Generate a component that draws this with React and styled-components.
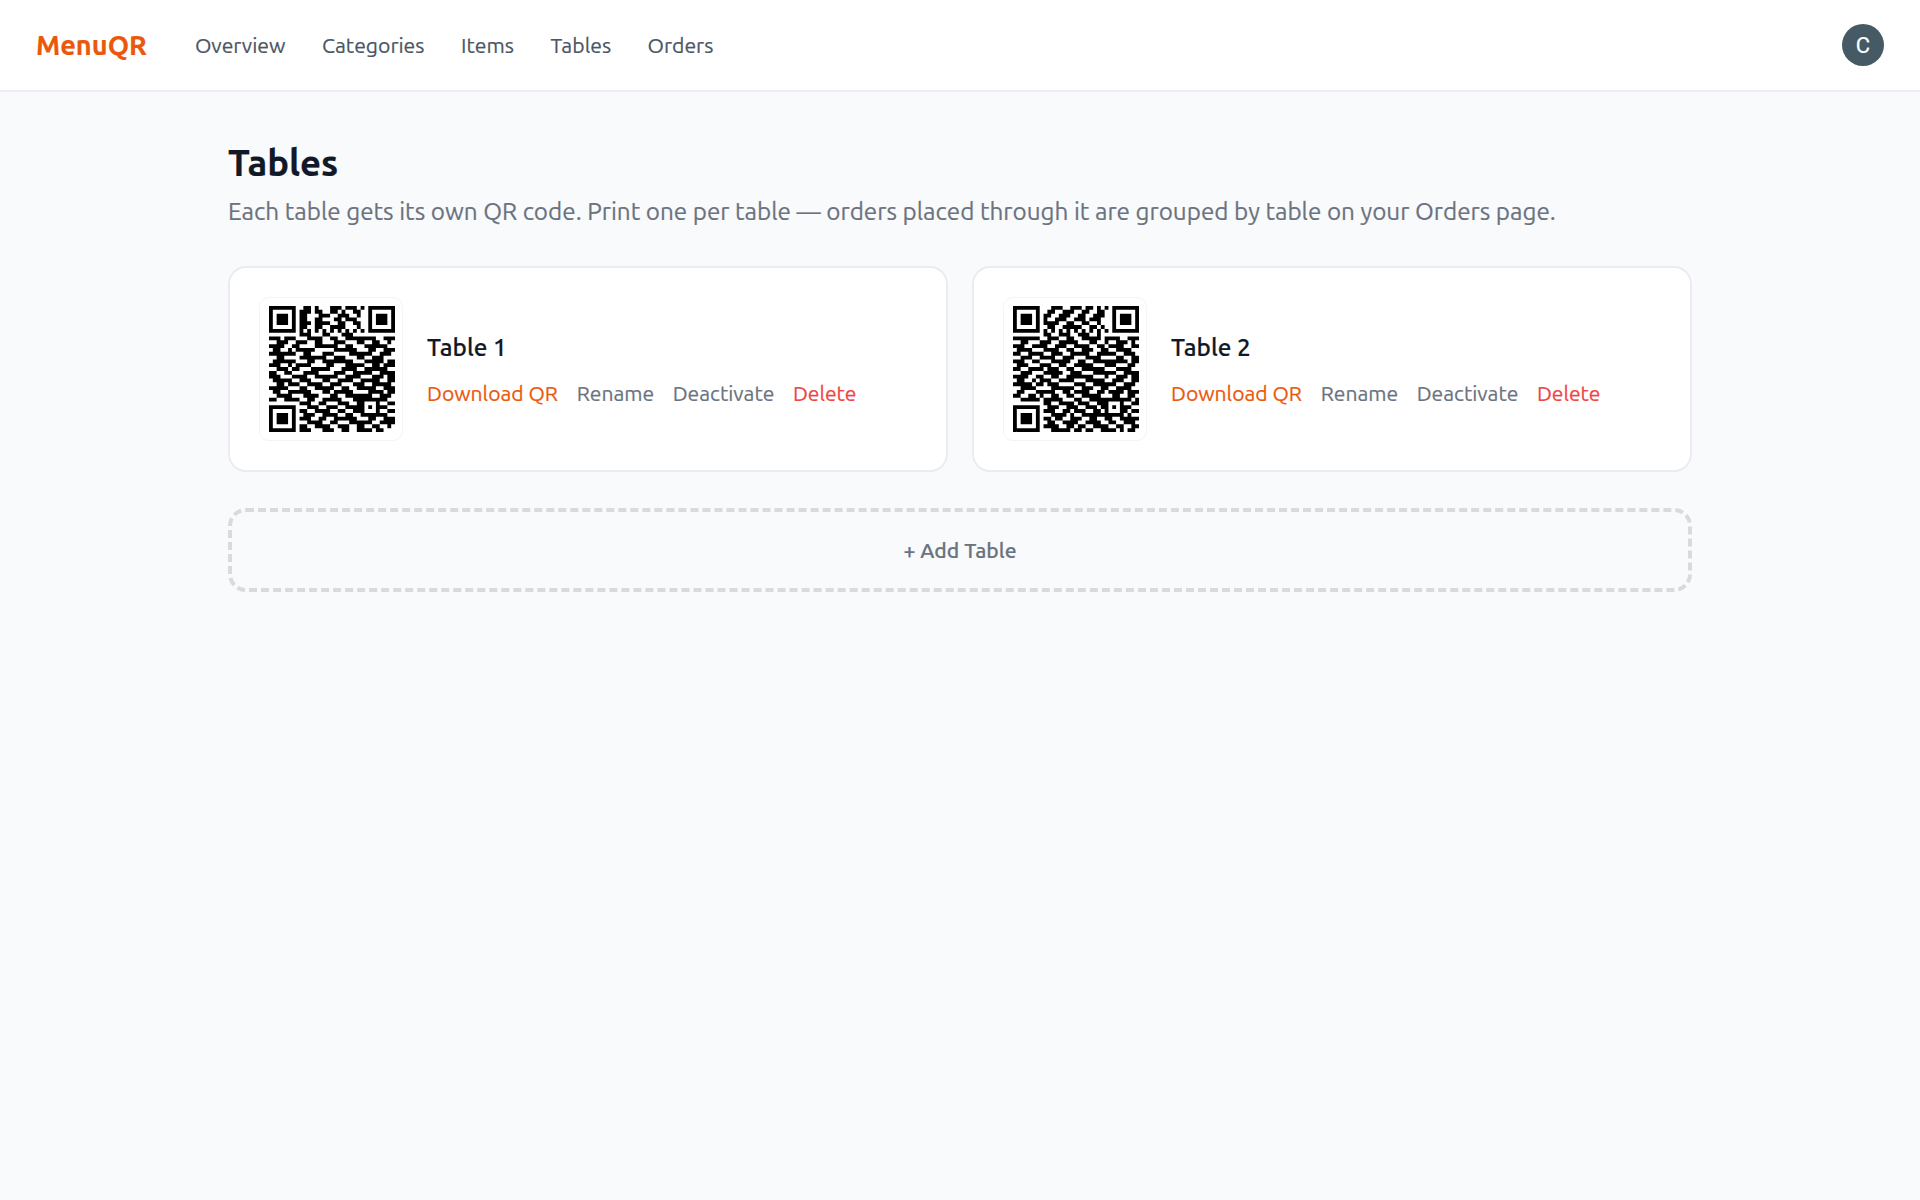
import styled, { createGlobalStyle } from "styled-components";

const QR_SIZE = 33;

const TABLE_ONE = [
  "00000000 01101000111011101 00000000",
  "00000000 11101100110100110 00000000",
  "00000000 11000111001110010 00000000",
  "00000000 11001100011011100 00000000",
  "00000000 11101111001100110 00000000",
  "00000000 11001100111100010 00000000",
  "00000000 00000000000000000 00000000",
  "00000000 11100011000111000 00000000",
  "11101110 00111100110011111 11100111",
  "00111001 11001100011100011 00110010",
  "11110011 00001111110011000 11111100",
  "01100111 11110000011111100 01100111",
  "11111100 01100011100001111 11001110",
  "00110000 11111110011100011 00111000",
  "01111110 00110011111111000 11111011",
  "11100111 11100001100011111 00110111",
  "00111011 00011111000111100 11111100",
  "11001110 01111000011100111 11001111",
  "11100011 11001111110011110 00111011",
  "01111100 11100011001111001 11110011",
  "00110111 00111100111000111 00111110",
  "11111000 11001111100110011 11100111",
  "01100111 11100011011111000 01111011",
  "00111100 01111000110011111 11001110",
  "11001111 00110011111000111 00111100",
  "00000000 11100110001110011 00110011",
  "00000000 00111001110011111 00111100",
  "00000000 11001111001100111 00110011",
  "00000000 01110011110011001 11111100",
  "00000000 11100110011111100 01100111",
  "00000000 00111100110001111 11001111",
  "00000000 11001111001110011 00110010",
  "00000000 11100011100110011 11011000",
];

const TABLE_TWO = [
  "00000000 00111001110110101 00000000",
  "00000000 01100111001100110 00000000",
  "00000000 11001110011001110 00000000",
  "00000000 10011100111011100 00000000",
  "00000000 11110011001100100 00000000",
  "00000000 01100111110011010 00000000",
  "00000000 00000000000000000 00000000",
  "00000000 11001110011100100 00000000",
  "11111100 01110011001111101 11100111",
  "00110011 11001111100011001 00111010",
  "11100111 10011100111100110 11110011",
  "01111000 11110011001110011 00111100",
  "11001111 00111001111100111 11001110",
  "00111001 11100111000111100 00110011",
  "11100110 00111110011001111 11111011",
  "01110011 11001100111110001 11000110",
  "11001111 01110011001111110 00111100",
  "00111000 11111001110001111 11001111",
  "11110011 00110011111110001 00111011",
  "01100111 11001111000111110 01110011",
  "11111001 01110000111001111 11001110",
  "00111110 00111111001110011 00111100",
  "01100011 11100110111100110 11110111",
  "11001111 00110011001111100 01100110",
  "00111100 11111000110011111 00111101",
  "00000000 11001111011100110 00110011",
  "00000000 01110011100111011 11001100",
  "00000000 11100110111001100 00111011",
  "00000000 00111101001111111 11100100",
  "00000000 11011001110011001 10011111",
  "00000000 01100111100111100 11001110",
  "00000000 11110011011001111 00110011",
  "00000000 00111110110110011 11010110",
];

// finder, timing and alignment marks are the same on every code
const finderAt = (r, c) => {
  const inside = (top, left) => {
    const y = r - top;
    const x = c - left;
    if (y < 0 || y > 6 || x < 0 || x > 6) return null;
    return Math.max(Math.abs(y - 3), Math.abs(x - 3)) !== 2;
  };
  return inside(0, 0) ?? inside(0, 26) ?? inside(26, 0);
};

const fixedAt = (r, c) => {
  const finder = finderAt(r, c);
  if (finder !== null) return finder;
  if ((r < 8 && (c < 8 || c > 24)) || (r > 24 && c < 8)) return false;
  const ring = Math.max(Math.abs(r - 26), Math.abs(c - 26));
  if (ring <= 2) return ring !== 1;
  if (r === 6 || c === 6) return (r + c) % 2 === 0;
  return null;
};

const qrPath = (rows) => {
  const cells = rows.map((row) => row.replace(/ /g, ""));
  let d = "";
  for (let r = 0; r < QR_SIZE; r++) {
    for (let c = 0; c < QR_SIZE; c++) {
      const fixed = fixedAt(r, c);
      const on = fixed === null ? cells[r][c] === "1" : fixed;
      if (on) d += `M${c} ${r}h1v1h-1z`;
    }
  }
  return d;
};

const tables = [
  { id: 1, name: "Table 1", rows: TABLE_ONE },
  { id: 2, name: "Table 2", rows: TABLE_TWO },
];

const navLinks = ["Overview", "Categories", "Items", "Tables", "Orders"];

const GlobalStyle = createGlobalStyle`
  html, body {
    margin: 0;
    background: #f9fafb;
  }
  body {
    font-family: Ubuntu, "Noto Sans", "Liberation Sans", sans-serif;
    min-height: 1200px;
    -webkit-text-stroke: 0.2px;
  }
`;

const Header = styled.header`
  height: 90px;
  padding: 0 36px;
  display: flex;
  align-items: center;
  justify-content: space-between;
  background: #fff;
  border-bottom: 2px solid #eceef1;
`;

const HeaderLeft = styled.div`
  display: flex;
  align-items: center;
  gap: 48px;
`;

const Logo = styled.div`
  font-size: 27.2px;
  font-weight: 700;
  color: #ea580c;
`;

const Nav = styled.nav`
  display: flex;
  gap: 36.5px;
`;

const NavLink = styled.a`
  font-size: 21.2px;
  color: #4b5563;
`;

const Avatar = styled.div`
  width: 42px;
  height: 42px;
  border-radius: 50%;
  background: #455a64;
  color: #fff;
  font-family: Roboto, sans-serif;
  font-size: 22px;
  display: flex;
  align-items: center;
  justify-content: center;
`;

const Main = styled.main`
  max-width: 1464px;
  margin: 0 auto;
  padding-top: 49px;
`;

const Title = styled.h1`
  margin: 0 0 8px;
  font-size: 36.4px;
  line-height: 44px;
  font-weight: 700;
  color: #111827;
`;

const Subtitle = styled.p`
  margin: 0 0 37px;
  font-size: 24.28px;
  line-height: 36px;
  color: #6b7280;
`;

const Cards = styled.div`
  display: grid;
  grid-template-columns: 1fr 1fr;
  gap: 24px;
  margin-bottom: 36px;
`;

const Card = styled.div`
  display: flex;
  align-items: center;
  gap: 24px;
  padding: 29px;
  background: #fff;
  border: 2px solid #eaecef;
  border-radius: 18px;
`;

const QrFrame = styled.div`
  padding: 8px 7px 8px 9px;
  background: #fff;
  border: 1px solid #f3f4f6;
  border-radius: 10px;
  line-height: 0;
`;

const TableName = styled.div`
  font-size: 24.3px;
  font-weight: 500;
  color: #111827;
  margin-bottom: 20px;
`;

const Actions = styled.div`
  display: flex;
  gap: 18.6px;
`;

const Action = styled.a`
  font-size: 21.1px;
  color: ${(p) => p.$color || "#6b7280"};
`;

const AddTable = styled.button`
  width: 100%;
  height: 84px;
  background: transparent;
  border: 4px dashed #d8dadf;
  border-radius: 18px;
  font-family: inherit;
  font-size: 21.1px;
  font-weight: 500;
  color: #6b7280;
`;

const QrCode = ({ rows }) => (
  <svg width="126" height="126" viewBox="0 0 33 33">
    <path d={qrPath(rows)} fill="#000" />
  </svg>
);

export default function App() {
  return (
    <>
      <GlobalStyle />
      <Header>
        <HeaderLeft>
          <Logo>MenuQR</Logo>
          <Nav>
            {navLinks.map((link) => (
              <NavLink key={link}>{link}</NavLink>
            ))}
          </Nav>
        </HeaderLeft>
        <Avatar>C</Avatar>
      </Header>
      <Main>
        <Title>Tables</Title>
        <Subtitle>
          Each table gets its own QR code. Print one per table — orders placed
          through it are grouped by table on your Orders page.
        </Subtitle>
        <Cards>
          {tables.map((table) => (
            <Card key={table.id}>
              <QrFrame>
                <QrCode rows={table.rows} />
              </QrFrame>
              <div>
                <TableName>{table.name}</TableName>
                <Actions>
                  <Action $color="#ea580c">Download QR</Action>
                  <Action>Rename</Action>
                  <Action>Deactivate</Action>
                  <Action $color="#ef4444">Delete</Action>
                </Actions>
              </div>
            </Card>
          ))}
        </Cards>
        <AddTable>+ Add Table</AddTable>
      </Main>
    </>
  );
}
